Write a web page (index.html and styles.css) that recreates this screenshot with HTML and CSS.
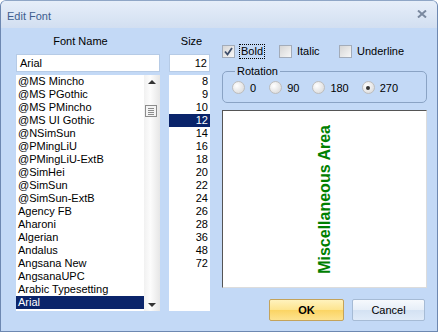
FILE: index.html
```html
<!DOCTYPE html>
<html lang="en">
<head>
    <meta charset="UTF-8">
    <title>Edit Font</title>
    <link rel="stylesheet" href="styles.css">
</head>
<body>

    <div class="window">
        <div class="titlebar">
            <span class="title">Edit Font</span>
            <svg class="close" width="10" height="8" viewBox="0 0 10 8">
                <path d="M1 0.5 L9 7.5 M9 0.5 L1 7.5" stroke="#7a899f" stroke-width="2"/>
            </svg>
        </div>

        <div class="main">
            <!-- font name and size pickers -->
            <div class="picker">
                <div class="label label-name">Font Name</div>
                <div class="label">Size</div>
                <div class="field">Arial</div>
                <div class="field field-size">12</div>

                <div class="list font-list">
                    <div class="items">
                        <div class="item">@MS Mincho</div>
                        <div class="item">@MS PGothic</div>
                        <div class="item">@MS PMincho</div>
                        <div class="item">@MS UI Gothic</div>
                        <div class="item">@NSimSun</div>
                        <div class="item">@PMingLiU</div>
                        <div class="item">@PMingLiU-ExtB</div>
                        <div class="item">@SimHei</div>
                        <div class="item">@SimSun</div>
                        <div class="item">@SimSun-ExtB</div>
                        <div class="item">Agency FB</div>
                        <div class="item">Aharoni</div>
                        <div class="item">Algerian</div>
                        <div class="item">Andalus</div>
                        <div class="item">Angsana New</div>
                        <div class="item">AngsanaUPC</div>
                        <div class="item">Arabic Typesetting</div>
                        <div class="item selected">Arial</div>
                        <div class="item">Arial Black</div>
                    </div>
                    <div class="scrollbar">
                        <div class="arrow"><span class="tri tri-up"></span></div>
                        <svg class="thumb" width="12" height="12" viewBox="0 0 12 12">
                            <rect x="0.5" y="0.5" width="11" height="11" fill="#f4f4f4" stroke="#8c8c8c"/>
                            <path d="M3 3.5 H9 M3 5.5 H9 M3 7.5 H9 M3 9.5 H9" stroke="#8c8c8c" stroke-width="1"/>
                        </svg>
                        <div class="track"></div>
                        <div class="arrow"><span class="tri tri-down"></span></div>
                    </div>
                </div>

                <div class="list size-list">
                    <div class="item">8</div>
                    <div class="item">9</div>
                    <div class="item">10</div>
                    <div class="item selected">12</div>
                    <div class="item">14</div>
                    <div class="item">16</div>
                    <div class="item">18</div>
                    <div class="item">20</div>
                    <div class="item">22</div>
                    <div class="item">24</div>
                    <div class="item">26</div>
                    <div class="item">28</div>
                    <div class="item">36</div>
                    <div class="item">48</div>
                    <div class="item">72</div>
                </div>
            </div>

            <!-- style, rotation, preview and buttons -->
            <div class="options">
                <div class="styles">
                    <label class="check-item">
                        <span class="check">
                            <svg width="9" height="9" viewBox="0 0 9 9">
                                <path d="M1 4.5 L3.5 7.5 L8 1" fill="none" stroke="#3d4e6b" stroke-width="1.8"/>
                            </svg>
                        </span>
                        <span class="focus">Bold</span>
                    </label>
                    <label class="check-item">
                        <span class="check"></span>
                        <span>Italic</span>
                    </label>
                    <label class="check-item">
                        <span class="check"></span>
                        <span>Underline</span>
                    </label>
                </div>

                <fieldset class="rotation">
                    <legend>Rotation</legend>
                    <div class="radios">
                        <label class="radio-item"><span class="radio"></span>0</label>
                        <label class="radio-item"><span class="radio"></span>90</label>
                        <label class="radio-item"><span class="radio"></span>180</label>
                        <label class="radio-item"><span class="radio checked"></span>270</label>
                    </div>
                </fieldset>

                <div class="preview">
                    <span class="sample">Miscellaneous Area</span>
                </div>

                <div class="buttons">
                    <button class="btn btn-ok">OK</button>
                    <button class="btn">Cancel</button>
                </div>
            </div>
        </div>
    </div>

</body>
</html>
```

FILE: styles.css
```css
/* Edit Font dialog */
body {
    margin: 0;
    background-color: #fff;
    font-family: "Liberation Sans", Arial, sans-serif;
    font-size: 11px;
    color: #000;
}

.window {
    width: 436px;
    height: 330px;
    border: 1px solid #6d88b1;
    border-top-color: #8fa6c6;
    border-radius: 6px 6px 0 0;
    background-color: #c3d9f6;
    overflow: hidden;
}

.titlebar {
    height: 27px;
    display: flex;
    align-items: center;
    justify-content: space-between;
    padding: 0 10px 0 6px;
    background: linear-gradient(#e6eef9, #d2dff1);
}

.title {
    font-size: 11px;
    color: #3e5d8f;
    padding-top: 2px;
}

.close {
    margin-top: -2px;
}

.main {
    display: flex;
    gap: 12px;
    padding: 6px 0 0 15px;
}

/* left side */
.picker {
    display: grid;
    grid-template-columns: 144px 41px;
    column-gap: 9px;
    align-content: start;
}

.label {
    height: 14px;
    line-height: 14px;
    text-align: center;
    padding-left: 4px;
}

.label-name {
    padding: 0 15px 0 0;
}

.field {
    margin-top: 6px;
    height: 16px;
    line-height: 16px;
    padding: 0 3px;
    background-color: #fff;
    border: 1px solid #b6cbe6;
}

.field-size {
    text-align: right;
    padding-right: 2px;
}

.list {
    margin-top: 3px;
    height: 236px;
    background-color: #fff;
    overflow: hidden;
}

.item {
    height: 13px;
    line-height: 13px;
    white-space: nowrap;
}

.item.selected {
    background-color: #0a246a;
    color: #fff;
}

.font-list {
    display: flex;
}

.font-list .items {
    flex: 1;
}

.font-list .item {
    padding-left: 2px;
}

.size-list .item {
    text-align: right;
    padding-right: 2px;
}

.scrollbar {
    width: 16px;
    display: flex;
    flex-direction: column;
    align-items: center;
    background: linear-gradient(to right, #f1f1f1, #fcfcfc 40%, #e6e6e6);
}

.arrow {
    height: 14px;
    width: 100%;
    display: flex;
    align-items: center;
    justify-content: center;
}

.tri {
    width: 0;
    height: 0;
    border-left: 4px solid transparent;
    border-right: 4px solid transparent;
}

.tri-up {
    border-bottom: 4px solid #333;
}

.tri-down {
    border-top: 4px solid #333;
    margin-top: 2px;
}

.thumb {
    margin-top: 16px;
    margin-right: 3px;
}

.track {
    flex: 1;
}

/* right side */
.options {
    width: 205px;
    display: flex;
    flex-direction: column;
}

.styles {
    margin-top: 10px;
    height: 14px;
    display: grid;
    grid-template-columns: 57px 60px auto;
}

.check-item {
    display: flex;
    align-items: center;
    gap: 5px;
}

.check {
    width: 11px;
    height: 11px;
    display: flex;
    align-items: center;
    justify-content: center;
    border: 1px solid #a3acb9;
    background: linear-gradient(135deg, #d6d6d6, #f7f7f7);
}

.focus {
    outline: 1px dotted #000;
    padding: 0 1px;
    line-height: 13px;
}

.rotation {
    margin: 7px 0 0;
    height: 38px;
    padding: 3px 0 0 9px;
    border: 1px solid #8aa3c4;
    border-radius: 5px;
    box-sizing: border-box;
    min-width: 0;
}

.rotation legend {
    padding: 0 2px;
    margin-left: 3px;
    line-height: 13px;
}

.radios {
    display: flex;
    align-items: center;
    gap: 13px;
    height: 13px;
}

.radio-item {
    display: flex;
    align-items: center;
    gap: 5px;
}

.radio {
    width: 11px;
    height: 11px;
    border-radius: 50%;
    border: 1px solid #bdbdbd;
    background: radial-gradient(circle at 35% 35%, #fff, #d4d4d4);
    display: flex;
    align-items: center;
    justify-content: center;
}

.radio.checked::after {
    content: "";
    width: 4px;
    height: 4px;
    border-radius: 50%;
    background-color: #333;
}

.preview {
    margin-top: 7px;
    height: 176px;
    width: 203px;
    border: 1px solid;
    border-color: #555 #dcdcdc #dcdcdc #555;
    background-color: #fff;
    display: flex;
    align-items: center;
    justify-content: center;
}

.sample {
    writing-mode: vertical-rl;
    transform: rotate(180deg);
    font-size: 16px;
    font-weight: bold;
    color: #008000;
}

.buttons {
    margin-top: 11px;
    display: flex;
    justify-content: flex-end;
    gap: 8px;
    padding-right: 2px;
}

.btn {
    width: 73px;
    height: 22px;
    font-family: inherit;
    font-size: 11px;
    border: 1px solid #a6bbd5;
    border-radius: 2px;
    background: linear-gradient(#f6f9fd, #e6eef8 50%, #d4e2f3 51%, #e0ebf8);
    color: #000;
    padding: 0;
}

.btn-ok {
    width: 75px;
    font-weight: bold;
    border-color: #c4a35b;
    background: linear-gradient(#fff2bd, #fde48e 50%, #fbd463 51%, #fde38f);
}
```
